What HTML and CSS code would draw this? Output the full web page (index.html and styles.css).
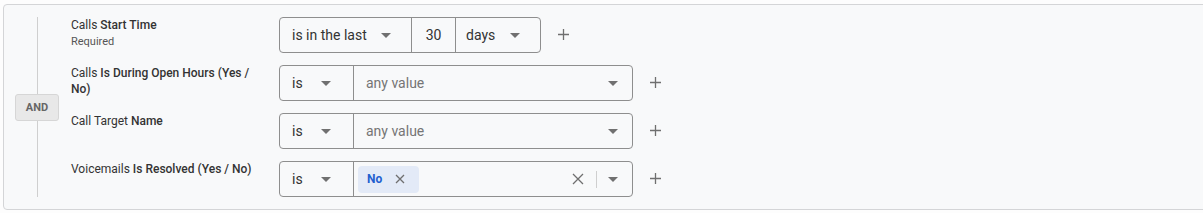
FILE: index.html
```html
<!DOCTYPE html>
<html>
<head>
<meta charset="utf-8">
<link rel="stylesheet" href="styles.css">
</head>
<body>
<div class="group">
  <div class="joiner">
    <div class="line"></div>
    <div class="badge">AND</div>
    <div class="line"></div>
  </div>
  <div class="rows">
    <div class="row">
      <div class="label">Calls <b>Start Time</b><div class="req">Required</div></div>
      <div class="ctrl">
        <div class="sel w-last"><span>is in the last</span><i class="caret"></i></div>
        <div class="num">30</div>
        <div class="sel w-days"><span>days</span><i class="caret"></i></div>
      </div>
      <svg class="plus" width="11" height="11" viewBox="0 0 11 11"><path d="M5.5 0v11M0 5.5h11" stroke="#6f6f6f" stroke-width="1.3"/></svg>
    </div>
    <div class="row">
      <div class="label">Calls <b>Is During Open Hours (Yes / No)</b></div>
      <div class="ctrl">
        <div class="sel w-is"><span>is</span><i class="caret"></i></div>
        <div class="val"><span class="ph">any value</span><i class="caret"></i></div>
      </div>
      <svg class="plus" width="11" height="11" viewBox="0 0 11 11"><path d="M5.5 0v11M0 5.5h11" stroke="#6f6f6f" stroke-width="1.3"/></svg>
    </div>
    <div class="row">
      <div class="label">Call Target <b>Name</b></div>
      <div class="ctrl">
        <div class="sel w-is"><span>is</span><i class="caret"></i></div>
        <div class="val"><span class="ph">any value</span><i class="caret"></i></div>
      </div>
      <svg class="plus" width="11" height="11" viewBox="0 0 11 11"><path d="M5.5 0v11M0 5.5h11" stroke="#6f6f6f" stroke-width="1.3"/></svg>
    </div>
    <div class="row">
      <div class="label">Voicemails <b>Is Resolved (Yes / No)</b></div>
      <div class="ctrl">
        <div class="sel w-is"><span>is</span><i class="caret"></i></div>
        <div class="val multi">
          <span class="chip"><span class="chip-t">No</span><svg width="10" height="10" viewBox="0 0 10 10"><path d="M1 1l8 8M9 1l-8 8" stroke="#6f6f6f" stroke-width="1.3"/></svg></span>
          <span class="tools">
            <svg width="12" height="12" viewBox="0 0 12 12"><path d="M1 1l10 10M11 1l-10 10" stroke="#6f6f6f" stroke-width="1.3"/></svg>
            <span class="sep"></span>
            <i class="caret"></i>
          </span>
        </div>
      </div>
      <svg class="plus" width="11" height="11" viewBox="0 0 11 11"><path d="M5.5 0v11M0 5.5h11" stroke="#6f6f6f" stroke-width="1.3"/></svg>
    </div>
  </div>
</div>
</body>
</html>
```
FILE: styles.css
```css
html, body {
  margin: 0;
  padding: 0;
  background: #fdfdfd;
  overflow: hidden;
}
body {
  font-family: Roboto, "Liberation Sans", sans-serif;
  color: #333;
}
.group {
  margin: 4px 0 0 3px;
  width: 1220px;
  box-sizing: border-box;
  border: 1px solid #d4d5d7;
  border-radius: 4px;
  background: #f8f9fa;
  padding: 12px 0 12px 11px;
  display: flex;
}
.joiner {
  width: 44px;
  margin-right: 12px;
  display: flex;
  flex-direction: column;
  align-items: center;
}
.line {
  flex: 1;
  width: 1px;
  background: #cfcfcf;
}
.badge {
  box-sizing: border-box;
  width: 44px;
  height: 27px;
  background: #e8e8e8;
  border: 1px solid #d6d6d6;
  border-radius: 3px;
  font-size: 11px;
  font-weight: 700;
  color: #666;
  display: flex;
  align-items: center;
  justify-content: center;
}
.rows {
  display: flex;
  flex-direction: column;
  gap: 12px;
}
.row {
  display: flex;
  align-items: flex-start;
}
.label {
  width: 196px;
  margin-right: 12px;
  font-size: 12px;
  line-height: 16px;
  color: #333;
}
.label b {
  font-weight: 500;
}
.req {
  font-size: 11px;
  line-height: 14px;
  color: #555;
  margin-top: 2px;
}
.ctrl {
  display: flex;
  height: 36px;
  box-sizing: border-box;
  border: 1px solid #8e8e8e;
  border-radius: 4px;
  font-size: 14px;
  color: #333;
}
.ctrl > * + * {
  border-left: 1px solid #8e8e8e;
}
.sel {
  box-sizing: border-box;
  display: flex;
  align-items: center;
  justify-content: space-between;
  padding: 0 20px 0 12px;
}
.w-last { width: 131px; }
.w-days { width: 85px; padding-left: 10px; }
.w-is { width: 73px; padding-right: 22px; }
.num {
  box-sizing: border-box;
  width: 44px;
  display: flex;
  align-items: center;
  justify-content: center;
}
.val {
  box-sizing: border-box;
  width: 279px;
  display: flex;
  align-items: center;
  justify-content: space-between;
  padding: 0 14px 0 12px;
}
.ph { color: #757575; }
.caret {
  display: block;
  width: 0;
  height: 0;
  border-left: 5px solid transparent;
  border-right: 5px solid transparent;
  border-top: 5px solid #707070;
}
.plus {
  margin: 12px 0 0 17px;
}
.ctrl.wide + .plus { margin-left: 17px; }
.multi {
  padding-left: 4px;
}
.chip {
  display: flex;
  align-items: center;
  height: 27px;
  box-sizing: border-box;
  padding: 0 14px 0 9px;
  background: #e3eaf7;
  border-radius: 4px;
  gap: 13px;
}
.chip-t {
  font-size: 12px;
  font-weight: 700;
  color: #1f5fcf;
}
.tools {
  display: flex;
  align-items: center;
}
.sep {
  width: 1px;
  height: 17px;
  background: #cfcfcf;
  margin: 0 11px 0 12px;
}
```
